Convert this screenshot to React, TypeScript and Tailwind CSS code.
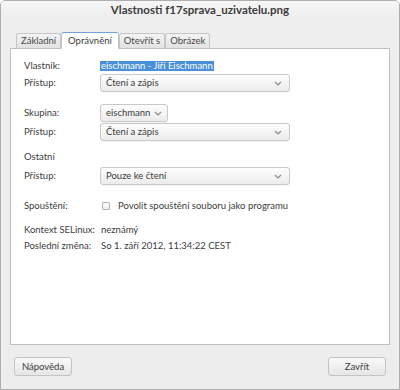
import React from "react";

const font = { fontFamily: 'Lato, "Noto Sans", sans-serif' };

const Chevron: React.FC = () => (
  <svg width="8" height="5" viewBox="0 0 8 5" className="shrink-0">
    <path d="M1 1l3 3 3-3" fill="none" stroke="#8a8a8a" strokeWidth="1.2" />
  </svg>
);

const Select: React.FC<{ value: string; wide?: boolean }> = ({ value, wide }) => (
  <div
    className={`h-[18px] flex items-center rounded-[3px] border border-[#c9c9c9] bg-gradient-to-b from-[#fdfdfd] to-[#ececec] pl-[5px] text-[#3c3c3c] shadow-[0_1px_0_rgba(0,0,0,0.04)] ${
      wide ? "w-[190px] pr-[7px] justify-between" : "pr-[5px] gap-[4px]"
    }`}
  >
    <span>{value}</span>
    <Chevron />
  </div>
);

const Row: React.FC<{ label: string; children: React.ReactNode; className?: string }> = ({
  label,
  children,
  className,
}) => (
  <div className={`flex items-center ${className ?? ""}`}>
    <div className="w-[76px] shrink-0 whitespace-nowrap h-[12px] leading-[12px]">{label}</div>
    {children}
  </div>
);

const tabs = ["Základní", "Oprávnění", "Otevřít s", "Obrázek"];

export default function App() {
  return (
    <div
      className="w-[400px] h-[390px] bg-[#ededed] border border-[#aeaeae] rounded-t-[5px] flex flex-col text-[9.5px] leading-[12px] text-[#3c3c3c] overflow-hidden"
      style={font}
    >
      <div className="h-[17px] shrink-0 flex items-center justify-center bg-gradient-to-b from-[#f6f6f6] to-[#eeeeee] text-[11.5px] font-bold text-[#3c3c3c]">
        Vlastnosti f17sprava_uzivatelu.png
      </div>

      <div className="px-[9px] pt-[14px] flex-1 flex flex-col bg-gradient-to-b from-[#eeeeee] to-[#ededed]">
        <div className="flex items-end pl-[6px] h-[16px]">
          {tabs.map((t) =>
            t === "Oprávnění" ? (
              <div
                key={t}
                className="h-[17px] px-[6px] flex items-center bg-white border border-[#c0c0c0] border-t-[#6ea4d9] border-b-white rounded-t-[3px] relative top-[1px] z-10"
              >
                {t}
              </div>
            ) : (
              <div
                key={t}
                className="h-[15px] px-[4px] flex items-center bg-gradient-to-b from-[#f4f4f4] to-[#e2e2e2] border border-[#c6c6c6] border-b-0 rounded-t-[3px] text-[#4a4a4a]"
              >
                {t}
              </div>
            )
          )}
        </div>

        <div className="h-[297px] shrink-0 bg-white border border-[#c0c0c0] px-[13px] pt-[11px]">
          <Row label="Vlastník:">
            <span className="bg-[#4a90d9] text-white h-[10px] leading-[10px] px-[1px]">
              eischmann - Jiří Eischmann
            </span>
          </Row>
          <Row label="Přístup:" className="mt-[2px]">
            <Select value="Čtení a zápis" wide />
          </Row>

          <Row label="Skupina:" className="mt-[12px]">
            <Select value="eischmann" />
          </Row>
          <Row label="Přístup:" className="mt-[1px]">
            <Select value="Čtení a zápis" wide />
          </Row>

          <div className="mt-[10px] h-[12px]">Ostatní</div>
          <Row label="Přístup:" className="mt-[4px]">
            <Select value="Pouze ke čtení" wide />
          </Row>

          <Row label="Spouštění:" className="mt-[15px]">
            <span className="ml-[2px] w-[8px] h-[8px] border border-[#b0b0b0] rounded-[1px] bg-gradient-to-b from-white to-[#eeeeee]" />
            <span className="ml-[8px]">Povolit spouštění souboru jako programu</span>
          </Row>

          <Row label="Kontext SELinux:" className="mt-[12px]">
            <span className="ml-[1px]">neznámý</span>
          </Row>
          <Row label="Poslední změna:" className="mt-[4px]">
            <span className="ml-[1px]">So 1. září 2012, 11:34:22 CEST</span>
          </Row>
        </div>

        <div className="flex justify-between px-[4px] mt-[12px]">
          <button className="w-[58px] h-[19px] rounded-[3px] border border-[#c4c4c4] bg-gradient-to-b from-[#f9f9f9] to-[#e6e6e6] text-[9.5px] text-[#3c3c3c]">
            Nápověda
          </button>
          <button className="w-[58px] h-[19px] rounded-[3px] border border-[#c4c4c4] bg-gradient-to-b from-[#f9f9f9] to-[#e6e6e6] text-[9.5px] text-[#3c3c3c]">
            Zavřít
          </button>
        </div>
      </div>
    </div>
  );
}
